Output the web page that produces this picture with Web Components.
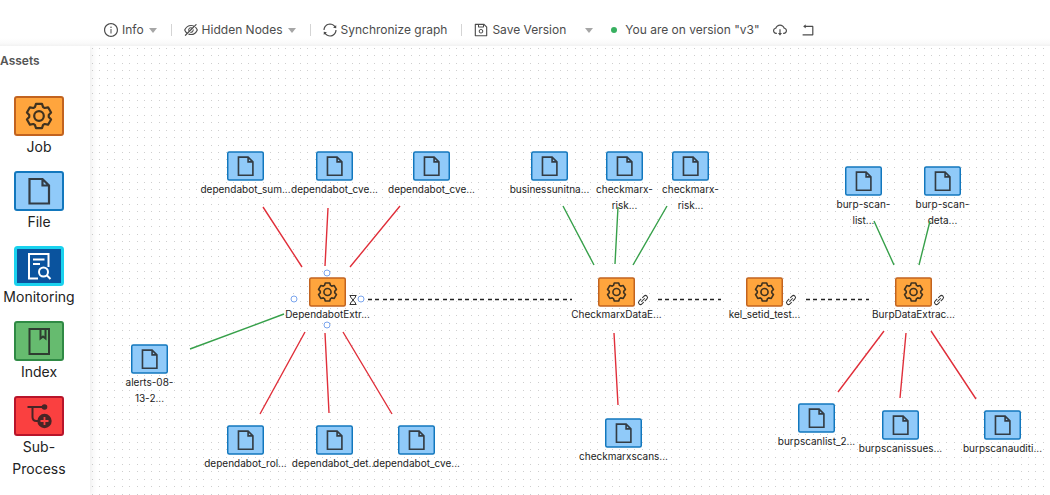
<!DOCTYPE html>
<html lang="en">
<head>
<meta charset="utf-8">
<title>Workflow graph</title>
<style>
  html, body { margin: 0; height: 100%; background: #fff; }
  body { font-family: Inter, "Open Sans", sans-serif; color: #222; overflow: hidden; }
</style>
</head>
<body>
<graph-app></graph-app>

<script>
const ICONS = {
  info: '<path d="M512 64C264.6 64 64 264.6 64 512s200.6 448 448 448 448-200.6 448-448S759.4 64 512 64zm0 820c-205.4 0-372-166.6-372-372s166.6-372 372-372 372 166.6 372 372-166.6 372-372 372z"/><path d="M464 336a48 48 0 1 0 96 0 48 48 0 1 0-96 0zm72 112h-48c-4.4 0-8 3.6-8 8v272c0 4.4 3.6 8 8 8h48c4.4 0 8-3.6 8-8V456c0-4.4-3.6-8-8-8z"/>',
  hidden: '<path d="M942.2 486.2Q889.47 375.11 816.7 305l-50.88 50.88C807.31 395.53 843.45 447.4 874.7 512 791.5 684.2 673.4 766 512 766q-72.67 0-133.87-22.38L323 798.75Q408 838 512 838q288.3 0 430.2-300.3a60.29 60.29 0 000-51.5zm-63.57-320.64L836 122.88a8 8 0 00-11.32 0L715.31 232.2Q624.86 186 512 186q-288.3 0-430.2 300.3a60.3 60.3 0 000 51.5q56.69 119.4 136.5 191.41L112.48 835a8 8 0 000 11.31L155.17 889a8 8 0 0011.31 0l712.15-712.12a8 8 0 000-11.32zM149.3 512C232.6 339.8 350.7 258 512 258c54.54 0 104.13 9.36 149.12 28.39l-70.3 70.3a176 176 0 00-238.13 238.13l-83.42 83.42C223.1 637.49 183.3 582.28 149.3 512zm246.7 0a112.11 112.11 0 01146.2-106.69L401.31 546.2A112 112 0 01396 512z"/><path d="M508 624c-3.46 0-6.87-.16-10.25-.47l-52.82 52.82a176.09 176.09 0 00227.42-227.42l-52.82 52.82c.31 3.38.47 6.79.47 10.25a111.94 111.94 0 01-112 112z"/>',
  sync: '<path d="M168 504.2c1-43.7 10-86.1 26.9-126 17.3-41 42.1-77.7 73.7-109.4S337 212.3 378 195c42.4-17.9 87.4-27 133.9-27s91.5 9.1 133.8 27A341.5 341.5 0 01755 268.8c9.9 9.9 19.2 20.4 27.8 31.4l-60.2 47a8 8 0 003 14.1l175.7 43c5 1.2 9.9-2.6 9.9-7.7l.8-180.9c0-6.7-7.7-10.5-12.9-6.3l-56.4 44.1C765.8 155.1 646.2 92 511.8 92 282.7 92 96.3 275.6 92 503.8a8 8 0 008 8.2h60c4.4 0 7.9-3.5 8-7.8zm756 7.8h-60c-4.4 0-7.9 3.5-8 7.8-1 43.7-10 86.1-26.9 126-17.3 41-42.1 77.8-73.7 109.4A342.45 342.45 0 01512.1 856a342.24 342.24 0 01-243.2-100.8c-9.9-9.9-19.2-20.4-27.8-31.4l60.2-47a8 8 0 00-3-14.1l-175.7-43c-5-1.2-9.9 2.6-9.9 7.7l-.7 181c0 6.7 7.7 10.5 12.9 6.3l56.4-44.1C258.2 868.9 377.8 932 512.2 932c229.2 0 415.5-183.7 419.8-411.8a8 8 0 00-8-8.2z"/>',
  save: '<path d="M893.3 293.3L730.7 130.7c-7.5-7.5-16.7-13-26.7-16V112H144c-17.7 0-32 14.3-32 32v736c0 17.7 14.3 32 32 32h736c17.7 0 32-14.3 32-32V338.5c0-17-6.7-33.2-18.7-45.2zM384 184h256v104H384V184zm456 656H184V184h136v136c0 17.7 14.3 32 32 32h320c17.7 0 32-14.3 32-32V205.8l136 136V840zM512 442c-79.5 0-144 64.5-144 144s64.5 144 144 144 144-64.5 144-144-64.5-144-144-144zm0 224c-44.2 0-80-35.8-80-80s35.8-80 80-80 80 35.8 80 80-35.8 80-80 80z"/>',
  cloud: '<path d="M624 706.3h-74.1V464c0-4.4-3.6-8-8-8h-60c-4.4 0-8 3.6-8 8v242.3H400c-6.7 0-10.4 7.7-6.3 12.9l112 141.7a8 8 0 0012.6 0l112-141.7c4.1-5.2.4-12.9-6.3-12.9z"/><path d="M811.4 366.7C765.6 245.9 648.9 160 512.2 160S258.8 245.8 213 366.6C127.3 389.1 64 467.2 64 560c0 110.5 89.5 200 199.9 200H304c4.4 0 8-3.6 8-8v-60c0-4.4-3.6-8-8-8h-40.1c-33.7 0-65.4-13.4-89-37.7-23.5-24.2-36-56.8-34.9-90.6.9-26.4 9.9-51.2 26.2-72.1 16.7-21.3 40.1-36.8 66.1-43.7l37.9-9.9 13.9-36.6c8.6-22.8 20.6-44.1 35.7-63.4a245.6 245.6 0 0152.4-49.9c41.1-28.9 89.5-44.2 140-44.2s98.9 15.3 140 44.2c19.9 14 37.5 30.8 52.4 49.9 15.1 19.3 27.1 40.7 35.7 63.4l13.8 36.5 37.8 10C846.1 454.5 884 503.8 884 560c0 33.1-12.9 64.3-36.3 87.7a123.07 123.07 0 01-87.6 36.3H720c-4.4 0-8 3.6-8 8v60c0 4.4 3.6 8 8 8h40.1C870.5 760 960 670.5 960 560c0-92.7-63.1-170.7-148.6-193.3z"/>',
  rollback: '<path d="M793 242H366v-74c0-6.7-7.7-10.6-12.9-6.3l-142 112a8 8 0 000 12.6l142 112c5.2 4.1 12.9.4 12.9-6.3v-74h415v470H175c-4.4 0-8 3.6-8 8v60c0 4.4 3.6 8 8 8h618c35.3 0 64-28.7 64-64V306c0-35.3-28.7-64-64-64z"/>'
};

// Six-toothed cog outline around the origin.
function cogPath() {
  const tooth = [[-3, 12.2], [3, 12.2], [4.1, 8.9]];
  const close = [-4.1, 8.9];
  let d = '';
  for (let i = 0; i < 6; i++) {
    const a = i * Math.PI / 3, c = Math.cos(a), s = Math.sin(a);
    for (const [u, v] of [close, ...tooth]) {
      d += (d ? 'L' : 'M') + (u * c + v * s).toFixed(2) + ' ' + (u * s - v * c).toFixed(2);
    }
  }
  return d + 'Z';
}

// Artwork of the asset tiles, drawn on a 50 x 40 tile.
const TILES = {
  job: { fill: '#ffa53d', edge: '#c2631f', art: `<g transform="translate(25 20)" fill="none" stroke="#40321f" stroke-width="2.2" stroke-linejoin="round"><path d="${cogPath()}"/><circle r="4.8"/></g>` },
  file: { fill: '#90caf9', edge: '#1277bd', art: '<path d="M15.5 8H28.5L35 14.5V32.500H15.500Z M28.500 8V14.500H35" fill="none" stroke="#333c44" stroke-width="2.2"/>' },
  monitoring: { fill: '#0a539e', edge: '#1ad2ee', thick: 1, art: '<g fill="none" stroke="#fff" stroke-width="2"><path d="M24 32.500H15V8H34.500V21M19 13.500H30.500M19 18H26"/><circle cx="29.500" cy="26" r="4.500"/><path d="M32.500 29L36.500 33"/></g>' },
  index: { fill: '#66bb6f', edge: '#2f8a44', art: '<path d="M15.500 8H35V33H15.500ZM26.500 8V17.500L29 15.500L31.500 17.500V8" fill="none" stroke="#2e3d30" stroke-width="2"/>' },
  sub: { fill: '#fa4040', edge: '#b8142a', art: '<path d="M13.500 11H30M18.500 11V21Q18.500 25 22.500 25H24" fill="none" stroke="#472526" stroke-width="2"/><circle cx="30.500" cy="11" r="2.800" fill="#472526"/><circle cx="30.500" cy="25" r="7.200" fill="#472526"/><path d="M30.500 21V29M26.500 25H34.500" stroke="#fa4040" stroke-width="1.800"/>' }
};

function define(name, html, setup) {
  const template = document.createElement('template');
  template.innerHTML = html;
  customElements.define(name, class extends HTMLElement {
    constructor() {
      super();
      this.attachShadow({ mode: 'open' }).append(template.content.cloneNode(true));
    }
    connectedCallback() { if (setup) setup(this, this.shadowRoot); }
  });
}

define('ui-icon', `
  <style>:host { display: block; width: 14px; height: 14px; flex: none; } svg { display: block; width: 100%; height: 100%; }</style>
  <svg viewBox="64 64 896 896" fill="currentColor" aria-hidden="true"></svg>`,
  (el, root) => { root.querySelector('svg').innerHTML = ICONS[el.getAttribute('name')]; });

define('tool-button', `
  <style>
    :host { display: block; flex: none; }
    button { display: flex; align-items: center; gap: 4px; padding: 0; border: 0; background: none; font: inherit; color: inherit; white-space: nowrap; }
    i { display: none; margin-left: 1px; border: solid transparent; border-width: 5px 4px 0; border-top-color: #a6a6a6; }
    :host([menu]) i { display: block; }
    :host([split]) i { margin-left: 15px; }
  </style>
  <button type="button"><ui-icon></ui-icon><slot></slot><i></i></button>`,
  (el, root) => {
    const icon = root.querySelector('ui-icon');
    icon.setAttribute('name', el.getAttribute('icon'));
    icon.shadowRoot.querySelector('svg').innerHTML = ICONS[el.getAttribute('icon')];
    if (el.title) root.querySelector('button').setAttribute('aria-label', el.title);
  });

define('tool-bar', `
  <style>
    :host { display: flex; align-items: center; padding: 19px 16px 5px 104px; font-size: 12px; line-height: 22px; color: #4c4c4c;
      background: linear-gradient(to top, #f2f2f2, #fafafa 3px, #fff 8px); }
    hr { flex: none; width: 1px; height: 12px; margin: 0 12px 0 14px; border: 0; background: #d4d4d4; }
    .status { display: flex; align-items: center; gap: 8px; margin: 0 13px 0 18px; white-space: nowrap; }
    .status::before { content: ""; width: 6px; height: 6px; border-radius: 50%; background: #38b060; }
    .last { margin-left: 14px; }
  </style>
  <tool-button icon="info" menu>Info</tool-button><hr>
  <tool-button icon="hidden" menu>Hidden Nodes</tool-button><hr>
  <tool-button icon="sync">Synchronize graph</tool-button><hr>
  <tool-button icon="save" menu split>Save Version</tool-button>
  <span class="status">You are on version "v3"</span>
  <tool-button icon="cloud" title="Download"></tool-button>
  <tool-button class="last" icon="rollback" title="Roll back"></tool-button>`);

define('asset-tile', `
  <style>
    :host { display: block; width: 50px; height: 40px; flex: none; }
    svg { display: block; width: 100%; height: 100%; }
  </style>
  <svg viewBox="0 0 50 40" aria-hidden="true"></svg>`,
  (el, root) => {
    const t = TILES[el.getAttribute('kind')];
    const w = t.thick ? 3 : 2;
    root.querySelector('svg').innerHTML =
      `<rect x="${w / 2}" y="${w / 2}" width="${50 - w}" height="${40 - w}" rx="2" fill="${t.fill}" stroke="${t.edge}" stroke-width="${w}"/>${t.art}`;
  });

define('asset-item', `
  <style>
    :host { display: flex; flex-direction: column; align-items: center; font-size: 14px; line-height: 22px; text-align: center; }
  </style>
  <div id="tile"></div><slot></slot>`,
  (el, root) => { root.querySelector('#tile').innerHTML = `<asset-tile kind="${el.getAttribute('kind')}"></asset-tile>`; });

define('asset-panel', `
  <style>
    :host { display: flex; flex-direction: column; gap: 13px; width: 78px; flex: none; padding: 4px 12px 4px 0; background: #fff; box-shadow: 0 0 8px #0000001c; z-index: 1; }
    h2 { margin: 0 0 11px; font-size: 12px; line-height: 22px; font-weight: 600; color: #555; }
  </style>
  <h2>Assets</h2>
  <asset-item kind="job">Job</asset-item>
  <asset-item kind="file">File</asset-item>
  <asset-item kind="monitoring">Monitoring</asset-item>
  <asset-item kind="index">Index</asset-item>
  <asset-item kind="sub"><span>Sub-<br>Process</span></asset-item>`);

define('graph-node', `
  <style>
    :host { position: absolute; display: flex; flex-direction: column; align-items: center; width: 37px; font-size: 10px; line-height: 16px; text-align: center; white-space: nowrap; }
    asset-tile { width: 37px; height: 30px; }
    :host([kind=job]) .label { margin-top: -1px; }
  </style>
  <div id="tile"></div><span class="label"><slot></slot></span>`,
  (el, root) => {
    el.style.left = el.getAttribute('x') + 'px';
    el.style.top = el.getAttribute('y') + 'px';
    root.querySelector('#tile').innerHTML = `<asset-tile kind="${el.getAttribute('kind') || 'file'}"></asset-tile>`;
  });

define('graph-canvas', `
  <style>
    :host { display: block; position: relative; flex: 1; min-width: 0; overflow: hidden; background: #fff; }
    svg { position: absolute; inset: 0; width: 100%; height: 100%; }
    .edges { overflow: visible; }
  </style>
  <svg aria-hidden="true">
    <defs><pattern id="dots" x="2" y="2" width="52" height="52" patternUnits="userSpaceOnUse"></pattern></defs>
    <rect width="100%" height="100%" fill="url(#dots)"/>
  </svg>
  <graph-node x="137" y="105">dependabot_sum...</graph-node>
  <graph-node x="226" y="105">dependabot_cve...</graph-node>
  <graph-node x="323" y="105">dependabot_cve...</graph-node>
  <graph-node x="441" y="105">businessunitna...</graph-node>
  <graph-node x="516" y="105">checkmarx-<br>risk...</graph-node>
  <graph-node x="582" y="105">checkmarx-<br>risk...</graph-node>
  <graph-node x="755" y="120">burp-scan-<br>list...</graph-node>
  <graph-node x="834" y="120">burp-scan-<br>deta...</graph-node>
  <graph-node x="219" y="231" kind="job">DependabotExtr...</graph-node>
  <graph-node x="508" y="231" kind="job">CheckmarxDataE...</graph-node>
  <graph-node x="656" y="231" kind="job">kel_setid_test...</graph-node>
  <graph-node x="805" y="231" kind="job">BurpDataExtrac...</graph-node>
  <graph-node x="41" y="298">alerts-08-<br>13-2...</graph-node>
  <graph-node x="137" y="379">dependabot_rol...</graph-node>
  <graph-node x="226" y="379">dependabot_det...</graph-node>
  <graph-node x="308" y="379">dependabot_cve...</graph-node>
  <graph-node x="515" y="372">checkmarxscans...</graph-node>
  <graph-node x="708" y="357">burpscanlist_2...</graph-node>
  <graph-node x="792" y="364">burpscanissues...</graph-node>
  <graph-node x="894" y="364">burpscanauditi...</graph-node>
  <svg class="edges" fill="none" stroke-width="1.4" aria-hidden="true">
    <path stroke="#e02f3a" d="M173 161L212 221M238 162L235 220M310 160L260 221M215 286L170 368M235 287L239 367M253 286L302 368M524 287L528 359M794 285L748 346M816 287L810 352M841 285L886 353"/>
    <path stroke="#37a04a" d="M473 160L504 219M528 161L525 218M577 160L543 219M784 175L804 219M840 175L829 219M100 303L194 268"/>
    <path stroke="#222" stroke-dasharray="4 3 4 4" d="M278 253.500H482M568 253.500H631M716 253.500H779"/>
    <g stroke="#333" stroke-width="1"><path d="M259.500 249.500H266.500M259.500 258.500H266.500M260.500 249.500V251L263 254L260.500 257V258.500M265.500 249.500V251L263 254L265.500 257V258.500"/></g>
    <g stroke="#7aa5ee" fill="#fff" stroke-width="1"><circle cx="204" cy="253" r="3"/><circle cx="237" cy="227" r="3"/><circle cx="271" cy="253" r="3"/><circle cx="237" cy="279" r="3"/></g>
    <g id="links" stroke="#333" stroke-width="1"></g>
  </svg>`,
  (el, root) => {
    const steps = [0, 7, 15, 22, 30, 37, 45];
    root.querySelector('#dots').innerHTML = steps.map(y => steps.map(x =>
      `<rect x="${x}" y="${y}" width="1" height="1" fill="#cecece"/>`).join('')).join('');
    root.querySelector('#links').innerHTML = [553, 701, 849].map(x =>
      `<g transform="translate(${x} 254) rotate(-45)"><path d="M-.5-2H-3.500A2 2 0 0 0-3.500 2H-1M.5 2H3.500A2 2 0 0 0 3.500-2H1M-2.500 0H2.500"/></g>`).join('');
  });

define('graph-app', `
  <style>
    :host { display: flex; flex-direction: column; height: 100%; }
    main { display: flex; flex: 1; min-height: 0; overflow: hidden; }
  </style>
  <tool-bar></tool-bar>
  <main><asset-panel></asset-panel><graph-canvas></graph-canvas></main>`);
</script>
</body>
</html>
